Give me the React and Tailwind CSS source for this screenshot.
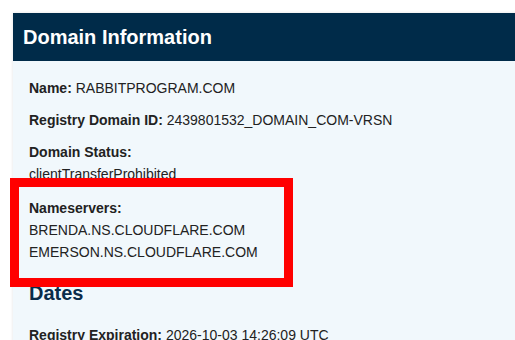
export default function App() {
  const font = { fontFamily: '"Liberation Sans", Arial, sans-serif' };
  return (
    <div className="relative w-[515px] h-[340px] overflow-hidden bg-white" style={font}>
      <div className="absolute left-[13px] top-[13px] w-[540px] h-[400px] bg-[#f1f8fc] shadow-[0_0_3px_rgba(0,0,0,0.12)]">
        <div className="h-[48px] bg-[#002b49] pl-[10px] flex items-center">
          <h2 className="text-[20px] font-bold text-white leading-[24px]">Domain Information</h2>
        </div>
        <div className="pl-4 pt-4 text-[14px] leading-[22px] text-[#222]">
          <p><span className="font-bold">Name:</span> RABBITPROGRAM.COM</p>
          <p className="mt-[10px]"><span className="font-bold">Registry Domain ID:</span> 2439801532_DOMAIN_COM-VRSN</p>
          <p className="mt-[10px] font-bold">Domain Status:</p>
          <p>clientTransferProhibited</p>
          <p className="mt-3 font-bold">Nameservers:</p>
          <p>BRENDA.NS.CLOUDFLARE.COM</p>
          <p>EMERSON.NS.CLOUDFLARE.COM</p>
          <h3 className="mt-[18px] text-[20px] leading-[24px] font-bold text-[#0a2c4a]">Dates</h3>
          <p className="mt-[19px]"><span className="font-bold">Registry Expiration:</span> 2026-10-03 14:26:09 UTC</p>
        </div>
      </div>
      <div className="absolute left-[10px] top-[178px] w-[283px] h-[109px] border-[9px] border-[#ff0000]" />
    </div>
  );
}
